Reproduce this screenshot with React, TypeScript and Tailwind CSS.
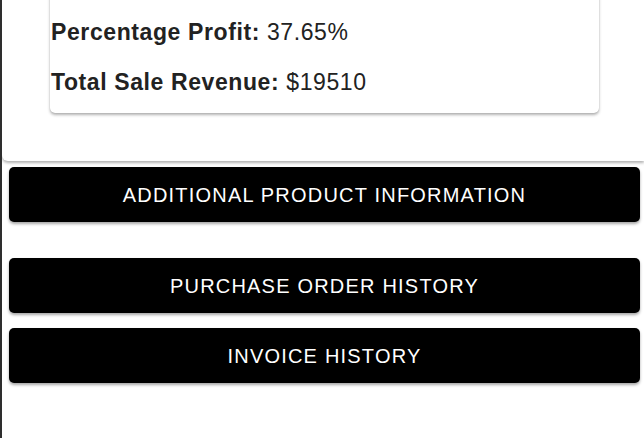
import React from "react";

export default function App() {
  const btn =
    "flex h-[55px] items-center justify-center rounded-[5px] bg-black text-[20px] uppercase tracking-[1.2px] text-white shadow-[0_2px_3px_rgba(0,0,0,0.35)]";
  return (
    <div className="min-h-screen overflow-hidden border-l-2 border-[#2e2e2e] bg-white font-['Liberation_Sans',Arial,sans-serif]">
      <div className="rounded-bl-[6px] bg-white pb-[48px] shadow-[0_2px_3px_rgba(0,0,0,0.3)]">
        <div className="-mt-[10px] ml-[48px] mr-[45px] flex flex-col gap-[17px] rounded-[5px] bg-white pb-[14px] pl-[1px] pt-[26px] text-[23px] leading-[33px] tracking-[0.6px] text-[#222] shadow-[0_2px_3px_rgba(0,0,0,0.3),0_0_1px_rgba(0,0,0,0.2)]">
          <p>
            <span className="font-bold">Percentage Profit:</span> 37.65%
          </p>
          <p>
            <span className="font-bold">Total Sale Revenue:</span> $19510
          </p>
        </div>
      </div>
      <div className="ml-[7px] mr-[4px] mt-[6px] flex flex-col">
        <button className={btn}>Additional Product Information</button>
        <button className={btn + " mt-[36px]"}>Purchase Order History</button>
        <button className={btn + " mt-[15px]"}>Invoice History</button>
      </div>
    </div>
  );
}
